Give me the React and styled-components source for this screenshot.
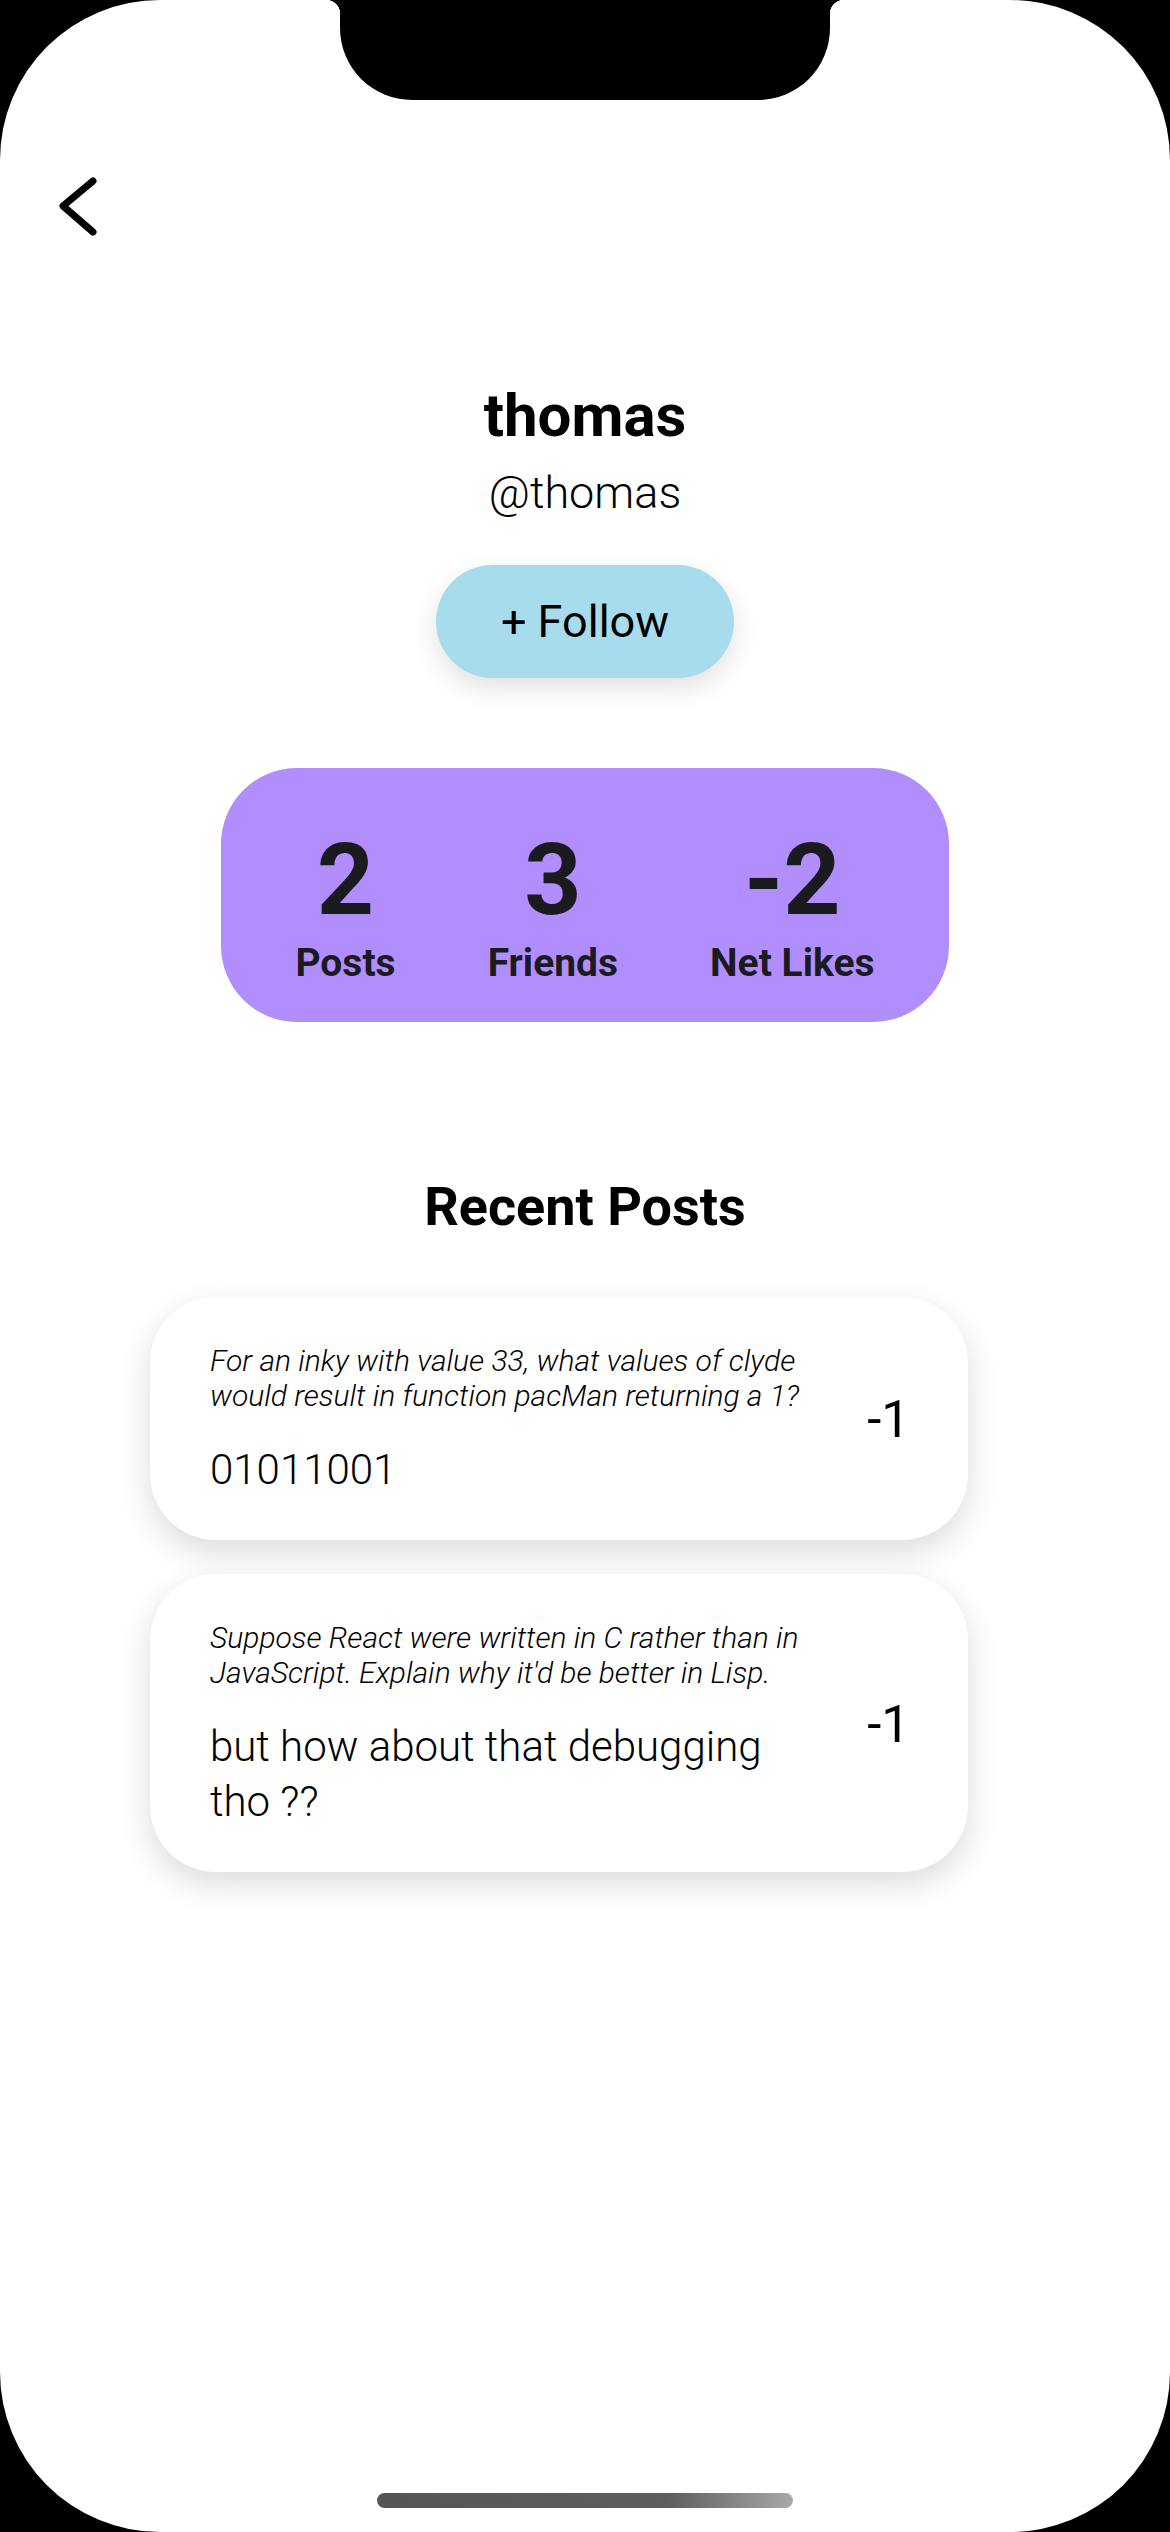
import React from "react";
import styled, { createGlobalStyle } from "styled-components";

const Global = createGlobalStyle`
  html, body { margin: 0; padding: 0; background: #000; }
  body { font-family: Roboto, "Noto Sans", "Liberation Sans", sans-serif; }
  * { box-sizing: border-box; }
`;

const Phone = styled.div`
  position: relative;
  width: 1170px;
  height: 2532px;
  background: #fff;
  border-radius: 160px;
  overflow: hidden;
  display: flex;
  flex-direction: column;
  align-items: center;
  color: #000;
`;

const Notch = styled.div`
  position: absolute;
  top: 0;
  left: 340px;
  width: 490px;
  height: 100px;
  background: #000;
  border-radius: 0 0 72px 72px;
  &::before, &::after {
    content: "";
    position: absolute;
    top: 0;
    width: 14px;
    height: 14px;
  }
  &::before {
    left: -14px;
    background: radial-gradient(circle at 0 100%, transparent 14px, #000 14.5px);
  }
  &::after {
    right: -14px;
    background: radial-gradient(circle at 100% 100%, transparent 14px, #000 14.5px);
  }
`;

const Header = styled.header`
  align-self: stretch;
  padding: 174px 0 0 56px;
  height: 238px;
`;

const BackButton = styled.button`
  display: block;
  width: 44px;
  height: 64px;
  padding: 0;
  border: none;
  background: transparent;
  cursor: pointer;
`;

const Profile = styled.section`
  display: flex;
  flex-direction: column;
  align-items: center;
  margin-top: 142px;
`;

const Name = styled.h1`
  margin: 0;
  font-size: 60px;
  line-height: 72px;
  font-weight: 700;
`;

const Handle = styled.div`
  margin-top: 14px;
  font-size: 45px;
  line-height: 54px;
  font-weight: 300;
`;

const FollowButton = styled.button`
  margin-top: 45px;
  width: 298px;
  height: 113px;
  border: none;
  border-radius: 57px;
  background: #a7dcec;
  box-shadow: 0 10px 26px rgba(0, 0, 0, 0.12);
  font-family: inherit;
  font-size: 45px;
  font-weight: 400;
  color: #000;
`;

const StatsCard = styled.section`
  margin-top: 90px;
  width: 728px;
  height: 254px;
  background: #b18efe;
  border-radius: 76px;
  display: flex;
  justify-content: center;
  gap: 92px;
  padding-top: 62px;
  color: #1b1b1f;
`;

const Stat = styled.div`
  display: flex;
  flex-direction: column;
  align-items: center;
`;

const StatValue = styled.div`
  font-size: 100px;
  line-height: 100px;
  font-weight: 700;
`;

const StatLabel = styled.div`
  margin-top: 10px;
  font-size: 39px;
  line-height: 47px;
  font-weight: 700;
`;

const SectionTitle = styled.h2`
  margin: 152px 0 0;
  font-size: 54px;
  line-height: 65px;
  font-weight: 700;
`;

const PostList = styled.div`
  align-self: flex-start;
  margin: 58px 0 0 150px;
  display: flex;
  flex-direction: column;
  gap: 34px;
`;

const PostCard = styled.article`
  width: 818px;
  background: #fff;
  border-radius: 66px;
  box-shadow: 0 12px 32px rgba(0, 0, 0, 0.14);
  padding: 46px 58px 43px 60px;
  display: flex;
  align-items: center;
  gap: 44px;
`;

const PostText = styled.div`
  flex: 1;
  min-width: 0;
`;

const Prompt = styled.p`
  margin: 0;
  font-size: 30px;
  line-height: 35px;
  font-weight: 300;
  font-style: italic;
`;

const Body = styled.p`
  margin: 29px 0 0;
  font-size: 42px;
  line-height: 55px;
  font-weight: 300;
`;

const Score = styled.div`
  font-size: 51px;
  line-height: 60px;
  font-weight: 400;
`;

const HomeIndicator = styled.div`
  position: absolute;
  left: 377px;
  bottom: 24px;
  width: 416px;
  height: 15px;
  border-radius: 8px;
  background: linear-gradient(90deg, #555 0%, #5e5e5e 70%, #a8a8a8 100%);
`;

const stats = [
  { value: "2", label: "Posts" },
  { value: "3", label: "Friends" },
  { value: "-2", label: "Net Likes" },
];

const posts = [
  {
    prompt: "For an inky with value 33, what values of clyde would result in function pacMan returning a 1?",
    body: "01011001",
    score: "-1",
  },
  {
    prompt: "Suppose React were written in C rather than in JavaScript. Explain why it'd be better in Lisp.",
    body: "but how about that debugging tho ??",
    score: "-1",
  },
];

export default function App() {
  return (
    <>
      <Global />
      <Phone>
        <Notch />
        <Header>
          <BackButton aria-label="Back">
            <svg width="44" height="64" viewBox="0 0 44 64">
              <path d="M37 7 L7 32 L37 58" fill="none" stroke="#000" strokeWidth="7" strokeLinecap="round" strokeLinejoin="round" />
            </svg>
          </BackButton>
        </Header>
        <Profile>
          <Name>thomas</Name>
          <Handle>@thomas</Handle>
          <FollowButton>+ Follow</FollowButton>
        </Profile>
        <StatsCard>
          {stats.map((s) => (
            <Stat key={s.label}>
              <StatValue>{s.value}</StatValue>
              <StatLabel>{s.label}</StatLabel>
            </Stat>
          ))}
        </StatsCard>
        <SectionTitle>Recent Posts</SectionTitle>
        <PostList>
          {posts.map((p, i) => (
            <PostCard key={i}>
              <PostText>
                <Prompt>{p.prompt}</Prompt>
                <Body>{p.body}</Body>
              </PostText>
              <Score>{p.score}</Score>
            </PostCard>
          ))}
        </PostList>
        <HomeIndicator />
      </Phone>
    </>
  );
}
